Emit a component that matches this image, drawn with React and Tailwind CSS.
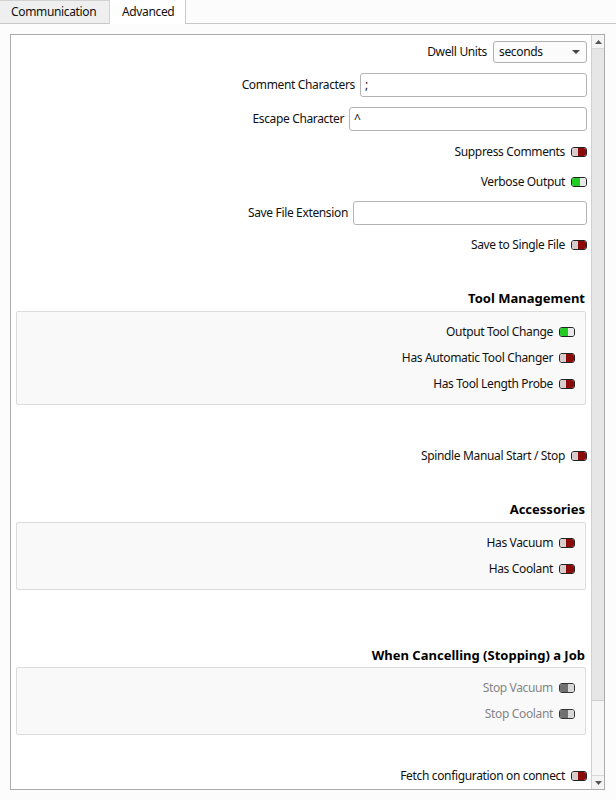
import React from "react";

const F = { fontFamily: '"Noto Sans", "Open Sans", sans-serif' };

function Toggle({ state }) {
  if (state === "on") {
    return (
      <div className="flex h-[10px] w-[16px] shrink-0 overflow-hidden rounded-[3px] border border-[#222]">
        <div className="w-[8px] bg-[#22cc22]" />
        <div className="flex-1 bg-[#e8e8e8]" />
      </div>
    );
  }
  if (state === "disabled") {
    return (
      <div className="flex h-[10px] w-[16px] shrink-0 overflow-hidden rounded-[3px] border border-[#333]">
        <div className="w-[8px] bg-[#707070]" />
        <div className="flex-1 bg-[#d8d8d8]" />
      </div>
    );
  }
  return (
    <div className="flex h-[10px] w-[16px] shrink-0 overflow-hidden rounded-[3px] border border-[#222]">
      <div className="w-[6px] bg-[#d8cccc]" />
      <div className="flex-1 bg-[#8c0a0a]" />
    </div>
  );
}

function ToggleRow({ label, state = "off", className = "" }) {
  return (
    <div className={"flex h-[20px] items-center justify-end gap-[6px] " + className}>
      <span className={state === "disabled" ? "text-[#858585]" : "text-[#111]"}>{label}</span>
      <Toggle state={state} />
    </div>
  );
}

function InputRow({ label, value, width, className = "" }) {
  return (
    <div className={"flex h-[24px] items-center gap-[5px] " + className}>
      <span className="flex-1 text-right text-[#111]">{label}</span>
      <div className={"flex h-[24px] flex-none items-center rounded-[3px] border border-[#b4b4b4] bg-white px-[4px] text-[#111] " + width}>
        {value}
      </div>
    </div>
  );
}

function Header({ children, className = "" }) {
  return (
    <div className={"flex h-[18px] items-center justify-end pr-[2px] text-[13px] font-bold tracking-normal text-black " + className}>
      {children}
    </div>
  );
}

function Group({ children, className = "" }) {
  return (
    <div className={"ml-[5px] mr-[1px] flex flex-col gap-[6px] rounded-[2px] border border-[#dcdcdc] bg-[#f9f9f9] pb-[10px] pr-[10px] pt-[10px] " + className}>
      {children}
    </div>
  );
}

export default function App() {
  return (
    <div className="flex h-[800px] w-[616px] flex-col bg-[#fcfcfc] text-[12px] tracking-[-0.35px]" style={F}>
      {/* tabs */}
      <div className="flex h-[24px] flex-none">
        <div className="flex w-[110px] items-center border-b border-r border-t border-[#d2d2d2] border-b-[#c8c8c8] bg-[#efefef] pl-[11px] text-[#111]">
          Communication
        </div>
        <div className="flex w-[76px] items-center border-r border-[#c8c8c8] bg-white pl-[12px] text-[#111]">
          Advanced
        </div>
        <div className="flex-1 border-b border-[#c8c8c8]" />
      </div>
      {/* body */}
      <div className="flex flex-1 pb-[10px] pl-[10px] pr-[11px] pt-[10px]">
        <div className="flex flex-1 border border-[#acacac] bg-white">
          <div className="flex flex-1 flex-col pr-[4px]">
            <div className="mt-[6px] flex h-[22px] items-center justify-end gap-[6px]">
              <span className="text-[#111]">Dwell Units</span>
              <div className="flex h-[22px] w-[94px] items-center justify-between rounded-[3px] border border-[#b0b0b0] bg-[#fbfbfb] pl-[5px] pr-[6px] text-[#111]">
                <span>seconds</span>
                <svg width="8" height="5" viewBox="0 0 8 5">
                  <path d="M0 0 L8 0 L4 4 Z" fill="#444" />
                </svg>
              </div>
            </div>
            <InputRow label="Comment Characters" value=";" width="w-[227px]" className="mt-[10px]" />
            <InputRow label="Escape Character" value="^" width="w-[238px]" className="mt-[10px]" />
            <ToggleRow label="Suppress Comments" className="mt-[11px]" />
            <ToggleRow label="Verbose Output" state="on" className="mt-[10px]" />
            <InputRow label="Save File Extension" value="" width="w-[234px]" className="mt-[9px]" />
            <ToggleRow label="Save to Single File" className="mt-[10px]" />

            <Header className="mt-[35px]">Tool Management</Header>
            <Group className="mt-[3px]">
              <ToggleRow label="Output Tool Change" state="on" />
              <ToggleRow label="Has Automatic Tool Changer" />
              <ToggleRow label="Has Tool Length Probe" />
            </Group>

            <ToggleRow label="Spindle Manual Start / Stop" className="mt-[41px]" />

            <Header className="mt-[35px]">Accessories</Header>
            <Group className="mt-[3px]">
              <ToggleRow label="Has Vacuum" />
              <ToggleRow label="Has Coolant" />
            </Group>

            <Header className="mt-[57px]">When Cancelling (Stopping) a Job</Header>
            <Group className="mt-[2px]">
              <ToggleRow label="Stop Vacuum" state="disabled" />
              <ToggleRow label="Stop Coolant" state="disabled" />
            </Group>

            <ToggleRow label="Fetch configuration on connect" className="mt-[31px]" />
          </div>
          {/* scrollbar */}
          <div className="flex w-[13px] flex-none flex-col border-l border-[#d0d0d0] bg-[#f4f4f4]">
            <div className="flex h-[14px] flex-none items-center justify-center border-b border-[#d8d8d8]">
              <svg width="7" height="4" viewBox="0 0 7 4">
                <path d="M0 4 L7 4 L3.5 0 Z" fill="#555" />
              </svg>
            </div>
            <div className="h-[652px] flex-none border-b border-[#cfcfcf] bg-[#e6e6e6]" />
            <div className="flex-1 bg-[#f6f6f6]" />
            <div className="flex h-[14px] flex-none items-center justify-center border-t border-[#d8d8d8]">
              <svg width="7" height="4" viewBox="0 0 7 4">
                <path d="M0 0 L7 0 L3.5 4 Z" fill="#555" />
              </svg>
            </div>
          </div>
        </div>
      </div>
    </div>
  );
}
